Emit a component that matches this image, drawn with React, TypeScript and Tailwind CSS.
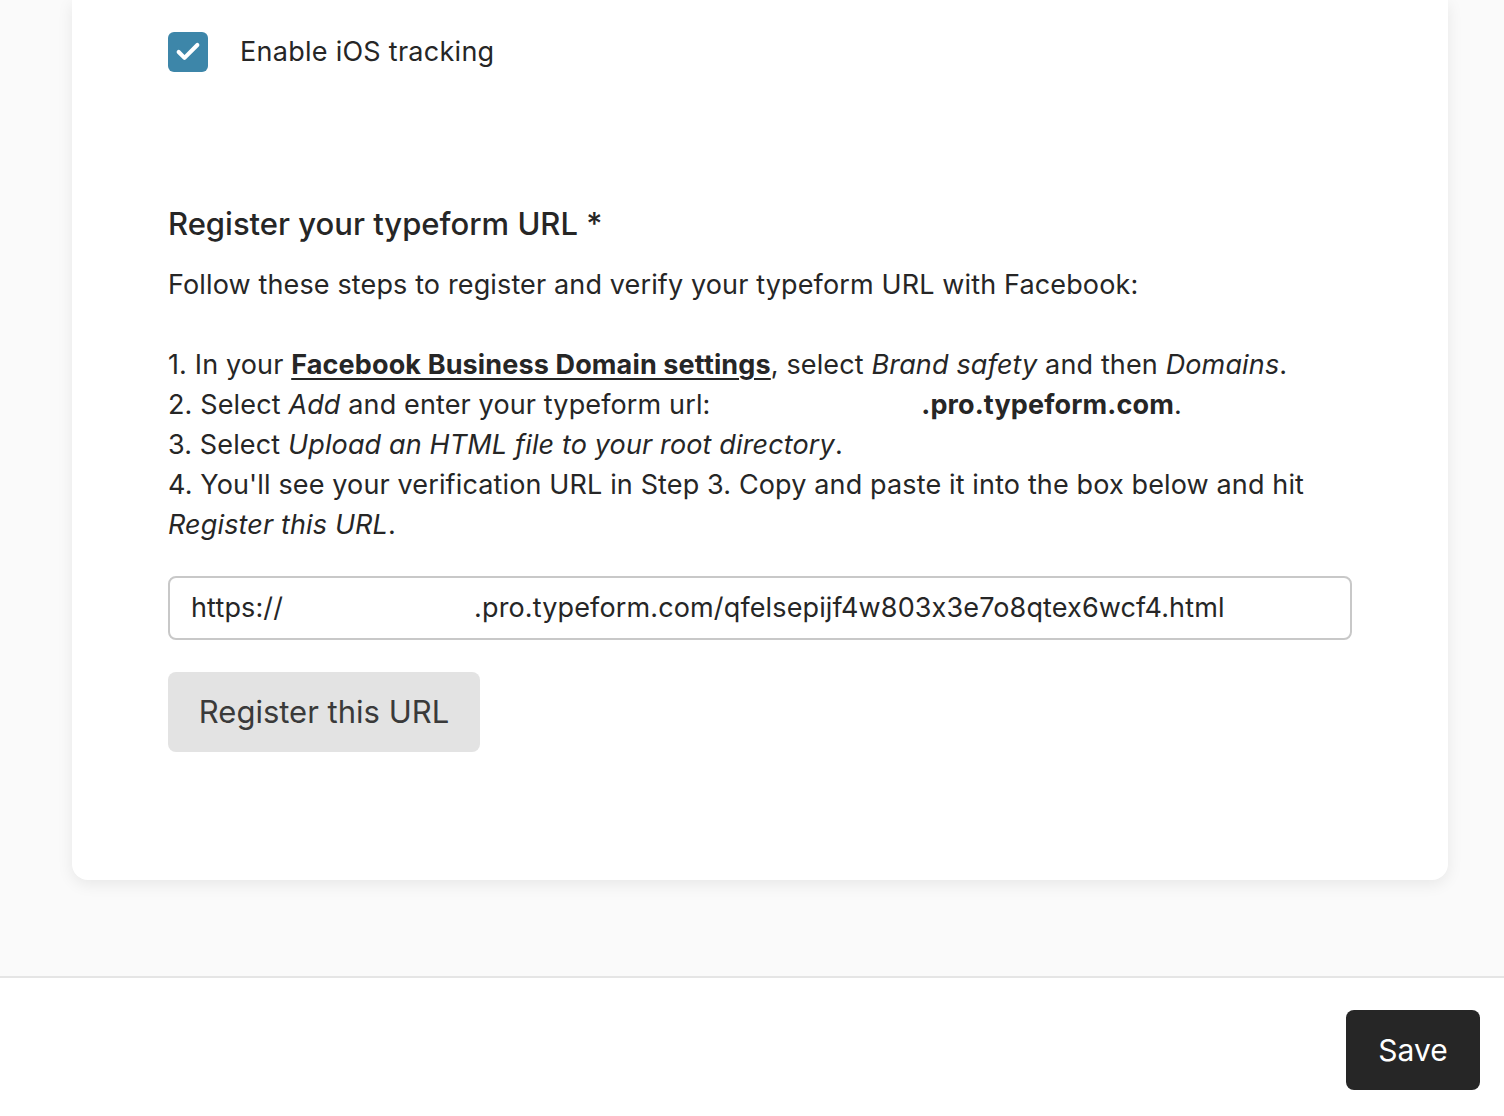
import { Check } from 'lucide-react';

const font = { fontFamily: 'Inter, "Noto Sans", sans-serif' };

function Checkbox() {
  return (
    <span className="flex h-10 w-10 items-center justify-center rounded-md bg-[#3d86a9]">
      <Check className="h-7 w-7 text-white" strokeWidth={3.5} />
    </span>
  );
}

export default function App() {
  return (
    <div
      className="flex min-h-[1116px] flex-col bg-white text-[#262626] [font-feature-settings:'calt'_0]"
      style={font}
    >
      <div className="h-[976px] bg-[#fafafa]">
        <div className="ml-[72px] mr-[56px] rounded-b-2xl bg-white pb-[128px] pl-24 pr-24 pt-8 shadow-[0_4px_16px_rgba(0,0,0,0.08)]">
          <label className="flex items-center gap-8">
            <Checkbox />
            <span className="text-[27px] leading-10 tracking-[0.01em]">Enable iOS tracking</span>
          </label>

          <h2 className="mt-[134px] text-[31px] font-medium leading-9">Register your typeform URL *</h2>
          <div className="mt-[23px] text-[27px] leading-10 tracking-[0.005em]">
            <p>Follow these steps to register and verify your typeform URL with Facebook:</p>
            <br />
            <p>
              1. In your{' '}
              <a href="#" className="font-bold underline underline-offset-4">
                Facebook Business Domain settings
              </a>
              , select <em>Brand safety</em> and then <em>Domains</em>.
            </p>
            <p>
              2. Select <em>Add</em> and enter your typeform url:{' '}
              <span className="inline-block w-[203px]" />
              <strong>.pro.typeform.com</strong>.
            </p>
            <p>
              3. Select <em>Upload an HTML file to your root directory</em>.
            </p>
            <p>
              4. You'll see your verification URL in Step 3. Copy and paste it into the box below and hit{' '}
              <em>Register this URL</em>.
            </p>
          </div>

          <div className="mt-[31px] flex h-16 items-center rounded-lg border-2 border-[#c8c8c8] px-[21px] text-[27px] tracking-[0.005em]">
            <span>https://</span>
            <span className="inline-block w-[191px]" />
            <span>.pro.typeform.com/qfelsepijf4w803x3e7o8qtex6wcf4.html</span>
          </div>

          <button
            type="button"
            className="mt-8 h-20 w-[312px] rounded-lg bg-[#e3e3e3] text-[31px] text-[#3a3a3a]"
          >
            Register this URL
          </button>
        </div>
      </div>
      <div className="flex flex-1 justify-end border-t-2 border-[#e5e5e5] bg-white pr-6 pt-8">
        <button type="button" className="h-20 w-[134px] rounded-lg bg-[#262626] text-[30px] text-white">
          Save
        </button>
      </div>
    </div>
  );
}
